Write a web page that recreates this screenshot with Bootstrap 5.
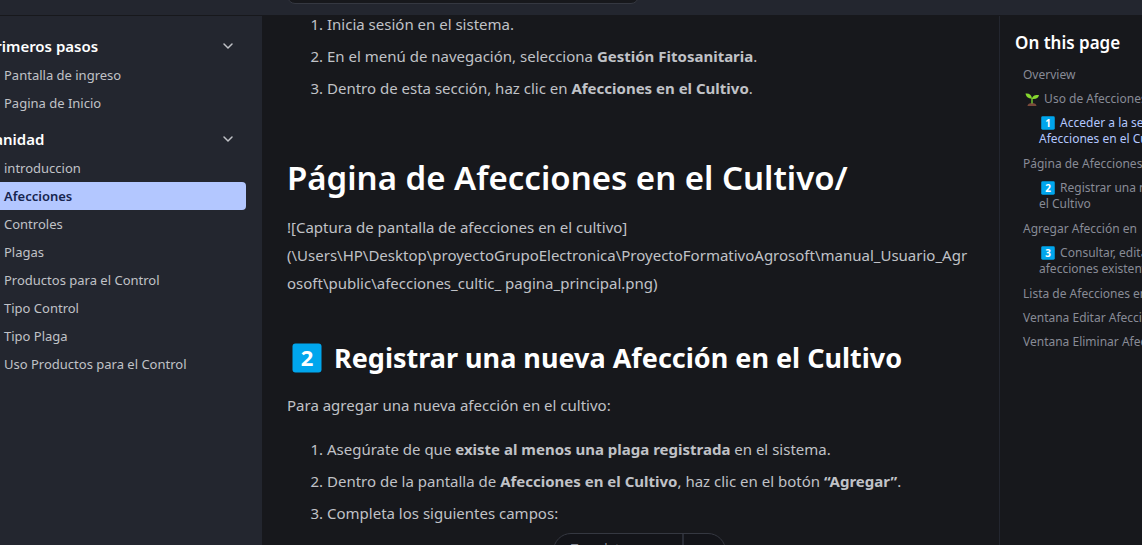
<!DOCTYPE html>
<html lang="es">
<head>
<meta charset="utf-8">
<meta name="viewport" content="width=device-width, initial-scale=1">
<title>Afecciones | Manual de Usuario</title>
<link rel="stylesheet" href="https://cdn.jsdelivr.net/npm/bootstrap@5.3.0/dist/css/bootstrap.min.css">
<style>
body{background:#17181c;color:#c0c2c7;font-family:"Noto Sans","Open Sans",sans-serif;font-size:15px;line-height:28px}
a{color:inherit;text-decoration:none}
.topbar{height:16px;background:#23262f;border-bottom:1px solid #17181c}
.topbar .leftpad{width:287px}
.search-btn{width:352px;height:40px;background:#17181c;border:1px solid #353841;border-radius:8px;margin-bottom:11px}
.sidebar{width:262px;background:#23262f;padding:16px 16px 0 0}
.group-btn{background:none;border:0;color:#fff;font-weight:600;font-size:15px;line-height:28px;height:28px;padding:0 10px 0 0;margin:0 0 1px -14px;width:260px}
.side-nav a{display:block;font-size:13px;line-height:28px;padding-left:4px;color:#c0c2c7}
.side-nav a.current{background:#b3c7ff;color:#17254f;font-weight:600;border-radius:0 4px 4px 0}
.side-nav + .group-btn{margin-top:8px}
.doc{padding:0 25px;min-width:0}
.doc h1,.doc h2{color:#fff}
.doc h1{font-size:33px;line-height:42px;font-weight:600;margin:55px 0 14px}
.doc h2{font-size:27px;line-height:40px;font-weight:700;margin:41px 0 13px}
.doc p{margin:0;overflow-wrap:anywhere}
.doc ol{margin:0;padding-left:40px}
.doc ol:first-child{margin-top:-6px}
.doc li{margin-bottom:4px}
.doc h2 svg{width:40px;height:30px;vertical-align:-5px}
.doc p + ol{margin-top:16px}
.toc{width:143px;border-left:1px solid #23262f;padding:13px 0 0 15px;white-space:nowrap}
.toc h2{font-size:17px;line-height:28px;font-weight:600;color:#fff;margin:0 0 10px}
.toc a{display:block;font-size:12px;line-height:16px;padding-left:8px;margin-bottom:8px;color:#888b96}
.toc a.deep{padding-left:24px;margin-bottom:9px}
.toc a.current{color:#b3c7ff}
.toc svg{width:18px;height:14px;vertical-align:-3px}
.pill{left:50%;bottom:-24px;width:173px;height:36px;margin-left:-18px;border:1px solid #353841;border-radius:18px;background:#131419;font-size:13px;color:#888b96}
.pill button{background:none;border:0;color:inherit;padding:0 0 0 17px;line-height:28px;text-align:left}
.pill button:first-child{width:130px;border-right:2px solid #2a2d36}
</style>
</head>
<body>
<svg class="d-none" xmlns="http://www.w3.org/2000/svg">
<symbol id="key" viewBox="0 0 30 30"><rect x=".5" y=".5" width="29" height="29" rx="3" fill="#00a6ed"/></symbol>
</svg>
<div class="vh-100 overflow-hidden d-flex flex-column position-relative">
<header class="topbar d-flex align-items-end flex-shrink-0 overflow-hidden">
<div class="leftpad flex-shrink-0"></div>
<button class="search-btn" type="button" aria-label="Buscar"></button>
</header>
<div class="d-flex flex-grow-1 overflow-hidden">
<nav class="sidebar flex-shrink-0 overflow-hidden">
<button type="button" class="group-btn d-flex justify-content-between align-items-center"><span>Primeros pasos</span><svg width="16" height="16" viewBox="0 0 16 16" fill="none" stroke="#c0c2c7" stroke-width="1.5" stroke-linecap="round"><path d="M4 6l4 4 4-4"/></svg></button>
<div class="side-nav"><a href="#">Pantalla de ingreso</a><a href="#">Pagina de Inicio</a></div>
<button type="button" class="group-btn d-flex justify-content-between align-items-center"><span>Sanidad</span><svg width="16" height="16" viewBox="0 0 16 16" fill="none" stroke="#c0c2c7" stroke-width="1.5" stroke-linecap="round"><path d="M4 6l4 4 4-4"/></svg></button>
<div class="side-nav"><a href="#">introduccion</a><a href="#" class="current">Afecciones</a><a href="#">Controles</a><a href="#">Plagas</a><a href="#">Productos para el Control</a><a href="#">Tipo Control</a><a href="#">Tipo Plaga</a><a href="#">Uso Productos para el Control</a></div>
</nav>
<main class="doc flex-grow-1">
<ol><li>Inicia sesión en el sistema.</li><li>En el menú de navegación, selecciona <strong>Gestión Fitosanitaria</strong>.</li><li>Dentro de esta sección, haz clic en <strong>Afecciones en el Cultivo</strong>.</li></ol>
<h1>Página de Afecciones en el Cultivo/</h1>
<p>![Captura de pantalla de afecciones en el cultivo]<br>(\Users\HP\Desktop\proyectoGrupoElectronica\ProyectoFormativoAgrosoft\manual_Usuario_Agr<wbr>osoft\public\afecciones_cultic_ pagina_principal.png)</p>
<h2><svg viewBox="0 0 40 30"><use href="#key" x="5" width="30" height="30"/><text x="20" y="23" text-anchor="middle" font-size="22" fill="#fff">2</text></svg> Registrar una nueva Afección en el Cultivo</h2>
<p>Para agregar una nueva afección en el cultivo:</p>
<ol><li>Asegúrate de que <strong>existe al menos una plaga registrada</strong> en el sistema.</li><li>Dentro de la pantalla de <strong>Afecciones en el Cultivo</strong>, haz clic en el botón <strong>“Agregar”</strong>.</li><li>Completa los siguientes campos:</li></ol>
</main>
<aside class="toc flex-shrink-0 overflow-hidden">
<h2>On this page</h2>
<a href="#">Overview</a>
<a href="#"><svg viewBox="0 0 18 14"><path d="M4.500 14c0-2 2-3 4.500-3s4.500 1 4.500 3z" fill="#7b4a3b"/><path d="M9 11.500V6" stroke="#6fc02f" stroke-width="1.500"/><path d="M9 6.500C5 6.500 3 4.500 2.500 1.500c3.500-.5 6 1 6.500 5z" fill="#86d72f"/><path d="M9 7c0-3 3-4.500 7-4-.5 3-3 4.500-7 4z" fill="#86d72f"/></svg> Uso de Afecciones</a>
<a href="#" class="deep current"><svg viewBox="0 0 18 14"><use href="#key" x="2" width="14" height="14"/><text x="9" y="11" text-anchor="middle" font-size="10" font-weight="700" fill="#fff">1</text></svg> Acceder a la sección<br>Afecciones en el Cultivo</a>
<a href="#">Página de Afecciones</a>
<a href="#" class="deep"><svg viewBox="0 0 18 14"><use href="#key" x="2" width="14" height="14"/><text x="9" y="11" text-anchor="middle" font-size="10" font-weight="700" fill="#fff">2</text></svg> Registrar una nueva<br>el Cultivo</a>
<a href="#">Agregar Afección en</a>
<a href="#" class="deep"><svg viewBox="0 0 18 14"><use href="#key" x="2" width="14" height="14"/><text x="9" y="11" text-anchor="middle" font-size="10" font-weight="700" fill="#fff">3</text></svg> Consultar, editar<br>afecciones existentes</a>
<a href="#">Lista de Afecciones en</a>
<a href="#">Ventana Editar Afección</a>
<a href="#">Ventana Eliminar Afección</a>
</aside>
</div>
<div class="pill position-absolute d-flex align-items-start"><button type="button">Translate</button><button type="button" class="h-100" aria-label="Más opciones"></button></div>
</div>
<script src="https://cdn.jsdelivr.net/npm/bootstrap@5.3.0/dist/js/bootstrap.bundle.min.js"></script>
</body>
</html>
